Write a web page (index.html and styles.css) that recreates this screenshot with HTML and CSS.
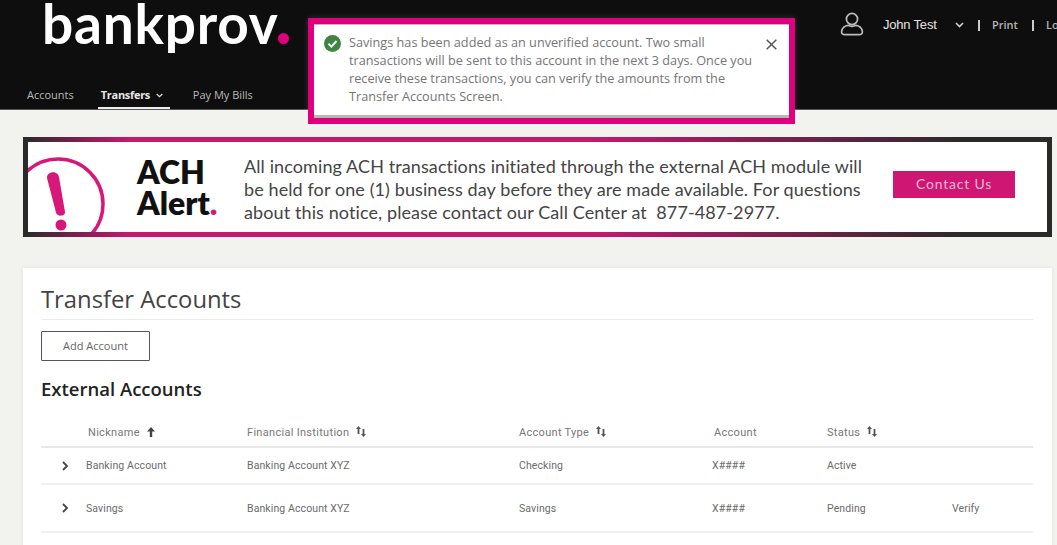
FILE: index.html
```html
<!DOCTYPE html>
<html lang="en">
<head>
    <meta charset="UTF-8">
    <meta name="viewport" content="width=device-width, initial-scale=1.0">
    <title>Transfer Accounts</title>
    <link rel="stylesheet" href="styles.css">
</head>
<body>
    <header class="site-header">
        <div class="header-top">
            <div class="logo">bankprov<span class="logo-dot"></span></div>
            <div class="user-menu">
                <svg class="user-icon" width="24" height="24" viewBox="0 0 24 24" fill="none" stroke="#bdbdbd" stroke-width="1.7">
                    <circle cx="12" cy="7" r="5.6"/>
                    <path d="M5 22.6c-2.2 0-3.6-1-3.4-3 .4-3.700 3.400-6 6.400-6.300 2.500 1.300 5.500 1.300 8 0 3 .3 6 2.600 6.400 6.300.2 2-1.200 3-3.400 3z"/>
                </svg>
                <span class="user-name">John Test</span>
                <svg class="user-caret" width="9" height="6" viewBox="0 0 9 6" fill="none" stroke="#d0d0d0" stroke-width="1.6"><path d="M1 1l3.500 3.500L8 1"/></svg>
                <span class="user-sep"></span>
                <span class="user-link">Print</span>
                <span class="user-sep"></span>
                <span class="user-link">Log Out</span>
            </div>
        </div>
        <nav class="main-nav">
            <a class="nav-item nav-first">Accounts</a>
            <a class="nav-item nav-active">Transfers
                <svg width="7" height="5" viewBox="0 0 7 5" fill="none" stroke="#ddd" stroke-width="1.200"><path d="M.7 1l2.800 2.600L6.300 1"/></svg>
            </a>
            <a class="nav-item">Pay My Bills</a>
        </nav>
    </header>

    <div class="toast">
        <svg class="toast-icon" width="17" height="17" viewBox="0 0 17 17">
            <circle cx="8.500" cy="8.500" r="8.500" fill="#3f8443"/>
            <path d="M4.500 8.800l2.900 2.800 5.100-5.600" fill="none" stroke="#fff" stroke-width="1.900"/>
        </svg>
        <p class="toast-text">Savings has been added as an unverified account. Two small transactions will be sent to this account in the next 3 days. Once you receive these transactions, you can verify the amounts from the Transfer Accounts Screen.</p>
        <svg class="toast-close" width="11" height="11" viewBox="0 0 11 11" stroke="#555" stroke-width="1.500"><path d="M.7.7l9.600 9.600M10.300.7L.7 10.300"/></svg>
    </div>

    <main class="page">
        <section class="alert-banner">
            <svg class="alert-icon" width="80" height="90" viewBox="0 0 80 90" fill="none">
                <circle cx="30" cy="62" r="45" stroke="#d6187a" stroke-width="3.500"/>
                <path d="M19 36c-.5-7 11-8 12-1l6 35c.5 4.500-8 5-9 .5z" fill="#d6187a"/>
                <circle cx="33" cy="83" r="5.500" fill="#d6187a"/>
            </svg>
            <div class="alert-title">ACH<br>Alert<span class="alert-dot">.</span></div>
            <p class="alert-text">All incoming ACH transactions initiated through the external ACH module will<br>be held for one (1) business day before they are made available. For questions<br>about this notice, please contact our Call Center at &nbsp;877-487-2977.</p>
            <a class="alert-button">Contact Us</a>
        </section>

        <section class="card">
            <h1 class="card-title">Transfer Accounts</h1>
            <button class="add-button">Add Account</button>
            <h2 class="section-title">External Accounts</h2>
            <table class="accounts">
                <colgroup>
                    <col class="col-toggle">
                    <col class="col-name">
                    <col class="col-bank">
                    <col class="col-type">
                    <col class="col-number">
                    <col class="col-status">
                    <col class="col-action">
                </colgroup>
                <thead>
                    <tr>
                        <th></th>
                        <th class="th-name">Nickname
                            <svg class="sort-up" width="8" height="10" viewBox="0 0 8 10" fill="#444"><path d="M4 0l4 4.500H5.200V10H2.800V4.500H0z"/></svg>
                        </th>
                        <th>Financial Institution
                            <svg class="sort" width="10" height="11" viewBox="0 0 10 11" fill="#555"><path d="M2.500 0l2.500 3H3.400v5H1.600V3H0zM7.500 11L5 8h1.600V3h1.800v5H10z"/></svg>
                        </th>
                        <th>Account Type
                            <svg class="sort" width="10" height="11" viewBox="0 0 10 11" fill="#555"><path d="M2.500 0l2.500 3H3.400v5H1.600V3H0zM7.500 11L5 8h1.600V3h1.800v5H10z"/></svg>
                        </th>
                        <th class="th-number">Account</th>
                        <th>Status
                            <svg class="sort" width="10" height="11" viewBox="0 0 10 11" fill="#555"><path d="M2.500 0l2.500 3H3.400v5H1.600V3H0zM7.500 11L5 8h1.600V3h1.800v5H10z"/></svg>
                        </th>
                        <th></th>
                    </tr>
                </thead>
                <tbody>
                    <tr class="row-first">
                        <td><svg class="chevron" width="7" height="10" viewBox="0 0 7 10" fill="none" stroke="#444" stroke-width="1.800"><path d="M1 1l4 4-4 4"/></svg></td>
                        <td>Banking Account</td>
                        <td>Banking Account XYZ</td>
                        <td>Checking</td>
                        <td>X####</td>
                        <td>Active</td>
                        <td></td>
                    </tr>
                    <tr class="row-second">
                        <td><svg class="chevron" width="7" height="10" viewBox="0 0 7 10" fill="none" stroke="#444" stroke-width="1.800"><path d="M1 1l4 4-4 4"/></svg></td>
                        <td>Savings</td>
                        <td>Banking Account XYZ</td>
                        <td>Savings</td>
                        <td>X####</td>
                        <td>Pending</td>
                        <td>Verify</td>
                    </tr>
                </tbody>
            </table>
        </section>
    </main>
</body>
</html>
```

FILE: styles.css
```css
html, body {
    margin: 0;
    height: 545px;
    overflow: hidden;
}
body {
    position: relative;
    background: #f2f2ef;
    font-family: "Open Sans", sans-serif;
    color: #333;
}

/* header */
.site-header {
    height: 110px;
    background: #0e0e0e;
    border-bottom: 1px solid #555;
    box-sizing: border-box;
    overflow: hidden;
}
.header-top {
    height: 80px;
    display: flex;
}
.logo {
    margin-left: 42px;
    width: 798px;
    flex: none;
    font-family: Lato, sans-serif;
    font-weight: 700;
    font-size: 55px;
    line-height: 46px;
    letter-spacing: .8px;
    color: #fff;
}
.logo-dot {
    display: inline-block;
    width: 11px;
    height: 11px;
    margin-left: -1px;
    border-radius: 50%;
    background: #e0007f;
}
.user-menu {
    display: flex;
    align-items: center;
    height: 48px;
    flex: none;
    white-space: nowrap;
    color: #ddd;
}
.user-icon {
    margin-right: 19px;
    margin-top: -1px;
}
.user-name {
    font-family: "Liberation Sans", sans-serif;
    font-size: 13px;
    letter-spacing: -.2px;
    width: 72px;
    color: #e4e4e4;
}
.user-caret {
    margin-right: 14px;
    margin-top: 2px;
}
.user-sep {
    width: 2px;
    height: 11px;
    background: #ccc;
    margin-top: 2px;
}
.user-link {
    font-size: 11px;
    font-weight: 600;
    color: #b5b5b5;
    margin: 1px 14px 0 12px;
}
.main-nav {
    display: flex;
    padding-left: 27px;
    height: 29px;
}
.nav-item {
    font-size: 11px;
    line-height: 30px;
    color: #b8b8b8;
    white-space: nowrap;
}
.nav-first {
    margin-right: 24px;
}
.nav-active {
    color: #e8e8e8;
    font-weight: 700;
    letter-spacing: -.3px;
    margin-right: 23px;
    width: 62px;
    padding: 0 7px 0 3px;
    border-bottom: 2px solid #eee;
    height: 27px;
}
.nav-active svg {
    margin-left: 3px;
    margin-bottom: 1px;
}

/* toast sits over the header */
.toast {
    position: absolute;
    left: 308px;
    top: 18px;
    width: 487px;
    height: 106px;
    box-sizing: border-box;
    border: 6px solid #e0007f;
    background: #fff;
    display: flex;
    align-items: flex-start;
    box-shadow: inset 0 1px 0 #bbb, inset 0 -3px 0 #b5b8b5, 0 0 6px rgba(255, 255, 255, .15);
    padding: 10px 0 0 10px;
}
.toast-icon {
    flex: none;
    margin: 1px 8px 0 0;
}
.toast-text {
    margin: -1px 0 0;
    width: 406px;
    flex: none;
    font-size: 12.700px;
    line-height: 18px;
    color: #757575;
}
.toast-close {
    margin: 5px 0 0 11px;
}

/* page */
.page {
    padding: 27px 5px 0 23px;
}
.alert-banner {
    height: 100px;
    box-sizing: border-box;
    display: flex;
    align-items: center;
    overflow: hidden;
    background: #fff;
    border: 5px solid #c8176f;
    border-image: linear-gradient(90deg, #2b2b2b, #c8176f 10%, #c8176f 55%, #2a2a2a 92%) 1;
}
.alert-icon {
    flex: none;
    align-self: flex-start;
}
.alert-title {
    margin-left: 29px;
    width: 107px;
    flex: none;
    font-family: Lato, sans-serif;
    font-weight: 800;
    font-size: 32px;
    line-height: 31px;
    color: #111;
}
.alert-dot {
    color: #d6187a;
}
.alert-text {
    margin: 0;
    padding-top: 5px;
    flex: none;
    width: 649px;
    font-family: Lato, sans-serif;
    font-size: 18px;
    line-height: 23px;
    letter-spacing: .1px;
    color: #444;
    white-space: nowrap;
}
.alert-button {
    width: 122px;
    height: 27px;
    flex: none;
    background: #cf1673;
    color: #f3b9d6;
    font-family: Lato, sans-serif;
    font-size: 14px;
    letter-spacing: .8px;
    line-height: 26px;
    text-align: center;
    margin-top: -5px;
}

.card {
    margin-top: 31px;
    height: 300px;
    background: #fff;
    box-shadow: 0 0 4px rgba(0, 0, 0, .08);
    padding: 0 19px 0 18px;
}
.card-title {
    margin: 0;
    padding-top: 15px;
    height: 36px;
    border-bottom: 1px solid #ebebeb;
    font-size: 23.800px;
    font-weight: 400;
    line-height: 32px;
    color: #444;
}
.add-button {
    display: block;
    margin-top: 11px;
    padding: 0 0 2px;
    width: 109px;
    height: 30px;
    background: #fff;
    border: 1px solid #555;
    border-radius: 1px;
    font-family: "Open Sans", sans-serif;
    font-size: 11px;
    color: #666;
}
.section-title {
    margin: 15px 0 0;
    font-size: 18.500px;
    font-weight: 600;
    line-height: 26px;
    color: #222;
}

/* table */
.accounts {
    margin-top: 15px;
    width: 992px;
    table-layout: fixed;
    border-collapse: collapse;
    font-family: Roboto, sans-serif;
    font-size: 10.500px;
    letter-spacing: .1px;
    color: #6b6b6b;
}
.col-toggle { width: 45px; }
.col-name { width: 161px; }
.col-bank { width: 272px; }
.col-type { width: 193px; }
.col-number { width: 115px; }
.col-status { width: 125px; }
.col-action { width: 81px; }
.accounts th {
    height: 27px;
    padding: 2px 0 0;
    text-align: left;
    font-size: 11px;
    letter-spacing: .3px;
    font-weight: 400;
    color: #777;
    border-bottom: 2px solid #e8e8e8;
}
.accounts th svg {
    margin-left: 4px;
    vertical-align: -1px;
}
.accounts th.th-name,
.accounts th.th-number {
    padding-left: 2px;
}
.accounts td {
    padding: 0;
    border-bottom: 2px solid #f0f0f0;
}
.row-first td {
    height: 35px;
}
.row-second td {
    height: 46px;
}
.chevron {
    display: block;
    margin-left: 21px;
}
```
